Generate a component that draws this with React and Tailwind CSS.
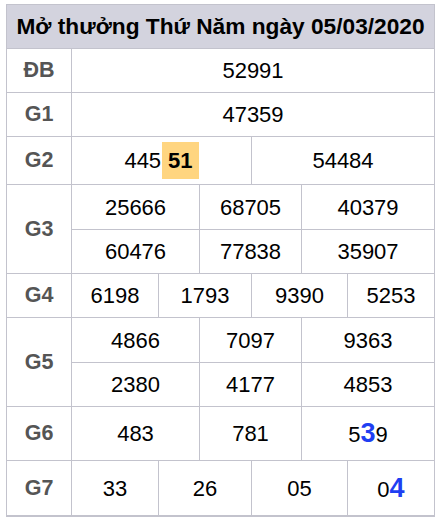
import React from "react";

const B = "border-[#c3c3cd]";

function Cell({ w, first, children, h = "h-[44px]" }) {
  return (
    <div
      className={`${h} flex items-center justify-center shrink-0 ${first ? "" : `border-l ${B}`}`}
      style={{ width: w }}
    >
      {children}
    </div>
  );
}

function Row({ label, children, last }) {
  return (
    <div className={`flex ${last ? "" : `border-b ${B}`}`}>
      <div
        className={`w-[65px] shrink-0 border-r ${B} flex items-center justify-center text-[21.5px] font-bold text-[#555555]`}
      >
        {label}
      </div>
      <div className="flex flex-col w-[362px]">{children}</div>
    </div>
  );
}

function Line({ widths, values, h = "h-[44px]", border }) {
  return (
    <div className={`flex ${border ? `border-b ${B}` : ""}`}>
      {values.map((v, i) => (
        <Cell key={i} w={widths[i]} first={i === 0} h={h}>
          {v}
        </Cell>
      ))}
    </div>
  );
}

const W3 = [127, 102, 133];
const W4 = [86, 93, 96, 87];

export default function App() {
  return (
    <div
      className="pl-[6px] pt-[4px] bg-white"
      style={{ fontFamily: '"Liberation Sans", Arial, sans-serif' }}
    >
      <div className={`w-[429px] border border-b-2 ${B} text-[22px] text-black`}>
        <div className={`h-[44px] bg-[#d3d3de] border-b ${B} flex items-center justify-center font-bold text-[22.7px]`}>
          Mở thưởng Thứ Năm ngày 05/03/2020
        </div>
        <Row label="ĐB">
          <Line widths={[362]} values={["52991"]} h="h-[43px]" />
        </Row>
        <Row label="G1">
          <Line widths={[362]} values={["47359"]} h="h-[43px]" />
        </Row>
        <Row label="G2">
          <Line
            widths={[179, 183]}
            h="h-[47px]"
            values={[
              <span className="flex items-center">
                445
                <span className="ml-px bg-[#ffd580] font-bold px-[6px] h-[37px] flex items-center">51</span>
              </span>,
              "54484",
            ]}
          />
        </Row>
        <Row label="G3">
          <Line widths={W3} values={["25666", "68705", "40379"]} border />
          <Line widths={W3} values={["60476", "77838", "35907"]} h="h-[43px]" />
        </Row>
        <Row label="G4">
          <Line widths={W4} values={["6198", "1793", "9390", "5253"]} h="h-[43px]" />
        </Row>
        <Row label="G5">
          <Line widths={W3} values={["4866", "7097", "9363"]} border />
          <Line widths={W3} values={["2380", "4177", "4853"]} h="h-[43px]" />
        </Row>
        <Row label="G6">
          <Line
            widths={W3}
            h="h-[53px]"
            values={[
              "483",
              "781",
              <span>
                5<span className="text-[#1f3ff2] font-bold text-[27px]">3</span>9
              </span>,
            ]}
          />
        </Row>
        <Row label="G7" last>
          <Line
            widths={W4}
            h="h-[54px]"
            values={[
              "33",
              "26",
              "05",
              <span>
                0<span className="text-[#1f3ff2] font-bold text-[27px]">4</span>
              </span>,
            ]}
          />
        </Row>
      </div>
    </div>
  );
}
